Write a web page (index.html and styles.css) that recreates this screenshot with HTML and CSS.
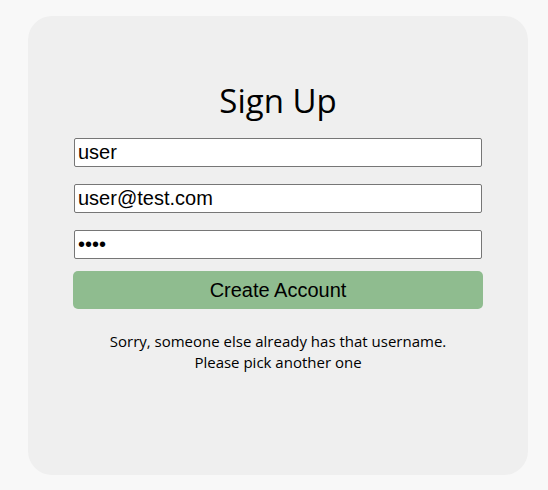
FILE: index.html
```html
<!DOCTYPE html>
<html>
<head>
<meta charset="utf-8">
<link rel="stylesheet" href="styles.css">
</head>
<body>
<div class="card">
  <h1 class="title">Sign Up</h1>
  <form class="form">
    <input class="field" type="text" value="user">
    <input class="field" type="email" value="user@test.com">
    <input class="field" type="password" value="pass">
    <button class="submit" type="button">Create Account</button>
  </form>
  <p class="message">Sorry, someone else already has that username.<br>Please pick another one</p>
</div>
</body>
</html>
```
FILE: styles.css
```css
html, body {
  margin: 0;
  padding: 0;
  background: #f8f8f8;
}
body {
  padding: 16px 0 0 28px;
}
.card {
  box-sizing: border-box;
  width: 500px;
  height: 459px;
  background: #efefef;
  border-radius: 24px;
  padding-top: 65px;
  display: flex;
  flex-direction: column;
  align-items: center;
  font-family: "Open Sans", "Noto Sans", sans-serif;
  color: #000;
}
.title {
  margin: 0;
  font-size: 33px;
  font-weight: 400;
  line-height: 40px;
}
.form {
  width: 410px;
  margin-top: 17px;
  display: flex;
  flex-direction: column;
  align-items: center;
  gap: 17px;
}
.field {
  box-sizing: border-box;
  width: 408px;
  height: 29px;
  margin: 0;
  padding: 0 3px;
  border: 1px solid #767676;
  border-radius: 2px;
  background: #fff;
  font-family: "Liberation Sans", Arial, sans-serif;
  font-size: 20px;
  color: #000;
}
.submit {
  box-sizing: border-box;
  width: 410px;
  height: 38px;
  margin-top: -5px;
  border: none;
  border-radius: 5px;
  background: #8fbc8f;
  font-family: "Liberation Sans", Arial, sans-serif;
  font-size: 20px;
  color: #000;
}
.message {
  margin: 22px 0 0;
  text-align: center;
  font-size: 15px;
  line-height: 21px;
}
```
